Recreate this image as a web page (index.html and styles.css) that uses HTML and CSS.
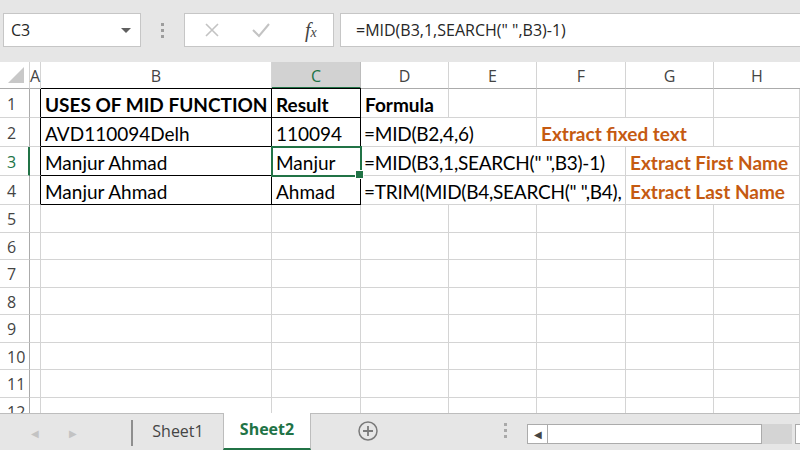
FILE: index.html
```html
<!DOCTYPE html>
<html lang="en">
<head>
    <meta charset="UTF-8">
    <title>MID function - Sheet2</title>
    <link rel="stylesheet" href="styles.css">
</head>
<body>
    <div class="app">
        <div class="toolbar">
            <div class="namebox">
                <span>C3</span>
                <span class="caret"></span>
            </div>
            <div class="grip"><i></i><i></i><i></i></div>
            <div class="fxbox">
                <svg class="ico" width="20" height="20" viewBox="0 0 20 20"><path d="M4 4 L16 16 M16 4 L4 16" stroke="#c3c3c3" stroke-width="1.6" fill="none"/></svg>
                <svg class="ico" width="22" height="20" viewBox="0 0 22 20"><path d="M3 10 L9 16 L19 4" stroke="#c3c3c3" stroke-width="2" fill="none"/></svg>
                <span class="fx">f<small>x</small></span>
            </div>
            <div class="formula">=MID(B3,1,SEARCH(" ",B3)-1)</div>
        </div>

        <div class="sheet">
            <div class="hd corner"><span class="tri"></span></div>
            <div class="hd col">A</div>
            <div class="hd col">B</div>
            <div class="hd col sel">C</div>
            <div class="hd col">D</div>
            <div class="hd col">E</div>
            <div class="hd col">F</div>
            <div class="hd col">G</div>
            <div class="hd col last">H</div>

            <div class="hd row">1</div>
            <div class="c edge"></div>
            <div class="c bx top bold">USES OF MID FUNCTION</div>
            <div class="c bx top bold">Result</div>
            <div class="c bold">Formula</div>
            <div class="c"></div>
            <div class="c"></div>
            <div class="c"></div>
            <div class="c"></div>

            <div class="hd row">2</div>
            <div class="c edge"></div>
            <div class="c bx">AVD110094Delh</div>
            <div class="c bx">110094</div>
            <div class="c span2 fm">=MID(B2,4,6)</div>
            <div class="c span2 note">Extract fixed text</div>
            <div class="c"></div>

            <div class="hd row rsel">3</div>
            <div class="c edge"></div>
            <div class="c bx">Manjur Ahmad</div>
            <div class="c bx active">Manjur</div>
            <div class="c span3 fm">=MID(B3,1,SEARCH(" ",B3)-1)</div>
            <div class="c span2 note">Extract First Name</div>

            <div class="hd row">4</div>
            <div class="c edge"></div>
            <div class="c bx">Manjur Ahmad</div>
            <div class="c bx">Ahmad</div>
            <div class="c span3 fm">=TRIM(MID(B4,SEARCH(" ",B4),</div>
            <div class="c span2 note">Extract Last Name</div>
        </div>

        <div class="tabs">
            <div class="nav">
                <span class="arrow">&#9664;</span>
                <span class="arrow">&#9654;</span>
            </div>
            <div class="tab">Sheet1</div>
            <div class="tab on">Sheet2</div>
            <div class="add">
                <svg width="22" height="22" viewBox="0 0 22 22"><circle cx="11" cy="11" r="9" stroke="#7a7a7a" stroke-width="1.5" fill="none"/><path d="M11 6 V16 M6 11 H16" stroke="#7a7a7a" stroke-width="1.8"/></svg>
            </div>
            <div class="grip small"><i></i><i></i><i></i></div>
            <div class="hscroll">
                <span class="sbtn">&#9664;</span>
                <span class="track"></span>
            </div>
            <div class="gap"></div>
            <div class="hscroll end"></div>
        </div>
    </div>

    <script>
        // empty rows 5 - 12
        const sheet = document.querySelector('.sheet');
        for (let r = 5; r <= 12; r++) {
            let html = `<div class="hd row">${r}</div><div class="c edge plain"></div>`;
            for (let k = 0; k < 7; k++) html += '<div class="c"></div>';
            sheet.insertAdjacentHTML('beforeend', html);
        }
    </script>
</body>
</html>
```

FILE: styles.css
```css
* { box-sizing: border-box; }
body { margin: 0; font-family: "Open Sans", "Noto Sans", sans-serif; background: #e6e6e6; }
.app { width: 800px; height: 450px; overflow: hidden; display: flex; flex-direction: column; }

/* formula bar */
.toolbar { height: 62px; display: flex; align-items: center; padding: 0 0 2px 3px; gap: 0; }
.namebox { width: 138px; height: 34px; background: #fff; border: 1px solid #c6c6c6; display: flex; align-items: center; justify-content: space-between; padding: 0 9px 0 7px; font-size: 16px; color: #262626; }
.caret { width: 0; height: 0; border-left: 5px solid transparent; border-right: 5px solid transparent; border-top: 5px solid #5f5f5f; }
.grip { width: 43px; display: flex; flex-direction: column; align-items: center; gap: 3px; }
.grip i { width: 3px; height: 3px; background: #9d9d9d; display: block; }
.fxbox { width: 150px; height: 34px; background: #fff; border: 1px solid #c6c6c6; display: flex; align-items: center; padding: 0 10px 0 17px; gap: 28px; }
.fx { font-family: "Liberation Serif", serif; font-style: italic; font-size: 20px; color: #444; margin-left: 5px; }
.fx small { font-size: 14px; }
.formula { flex: 1; height: 34px; margin-left: 6px; background: #fff; border: 1px solid #c6c6c6; border-right: none; display: flex; align-items: center; padding-left: 15px; font-size: 16px; color: #262626; }

/* grid */
.sheet { height: 351px; background: #fff; display: grid; overflow: hidden;
    grid-template-columns: 30px 11px 231px 89px 88px 88px 89px 88px 86px;
    grid-template-rows: 27px 29px 29px 29px 29px repeat(8, 27.5px);
    font-family: Lato, "Liberation Sans", sans-serif; font-size: 19px; color: #000; }
.hd { background: #fff; color: #444; font-family: "Open Sans", sans-serif; font-size: 16px; display: flex; align-items: center; justify-content: center; }
.col { border-right: 1px solid #d4d4d4; border-bottom: 1px solid #ababab; padding-top: 2px; }
.col.last { border-right: none; }
.col.sel { background: #d2d2d2; color: #217346; border-bottom: 2px solid #217346; border-right-color: #bcbcbc; }
.corner { border-right: 1px solid #d4d4d4; border-bottom: 1px solid #ababab; justify-content: flex-end; align-items: flex-end; padding: 0 5px 5px 0; }
.tri { width: 0; height: 0; border-left: 16px solid transparent; border-bottom: 16px solid #c8c8c8; }
.row { border-right: 1px solid #ababab; border-bottom: 1px solid #d4d4d4; justify-content: flex-start; padding-left: 7px; padding-top: 2px; }
.row.rsel { color: #217346; border-right: 2px solid #217346; background: #fff; }

.c { border-right: 1px solid #d4d4d4; border-bottom: 1px solid #d4d4d4; display: flex; align-items: flex-end; padding: 0 0 1px 4px; white-space: nowrap; overflow: hidden; }
.c.edge { border-right-color: #000; }
.c.edge.plain { border-right-color: #d4d4d4; }
.c.bx { border-right-color: #000; border-bottom-color: #000; }
.c.top { border-top: 1px solid #000; margin-top: -1px; }
.c.fm { letter-spacing: -0.25px; padding-left: 3px; }
.bold { font-weight: bold; }
.span2 { grid-column: span 2; }
.span3 { grid-column: span 3; }
.note { color: #c55a11; font-weight: bold; }
.active { position: relative; overflow: visible; outline: 2px solid #217346; outline-offset: -1px; }
.active::after { content: ""; position: absolute; right: -4px; bottom: -4px; width: 7px; height: 7px; background: #217346; border: 1px solid #fff; }

/* sheet tabs */
.tabs { flex: 1; display: flex; align-items: stretch; border-top: 1px solid #bdbdbd; background: #e6e6e6; }
.tabs > * { flex-shrink: 0; }
.nav { width: 133px; display: flex; align-items: center; gap: 30px; padding-left: 31px; border-right: 2px solid #8e8e8e; margin: 6px 0 4px; }
.arrow { font-size: 10px; color: #c3c3c3; }
.tab { width: 90px; display: flex; align-items: center; justify-content: center; font-size: 16px; color: #444; padding-bottom: 3px; }
.tab.on { width: 88px; background: #fff; color: #217346; font-weight: bold; border-left: 1px solid #bdbdbd; border-right: 1px solid #bdbdbd; border-bottom: 2px solid #217346; margin-top: -1px; }
.add { width: 114px; display: flex; align-items: center; justify-content: center; padding-bottom: 3px; }
.grip.small { width: 22px; margin-left: 69px; justify-content: center; gap: 3px; padding-bottom: 3px; }
.grip.small i { background: #a9a9a9; }
.hscroll { width: 235px; height: 20px; margin: 10px 0 0 11px; background: #fff; border: 1px solid #ababab; display: flex; }
.sbtn { width: 20px; border-right: 1px solid #ababab; font-size: 10px; color: #444; display: flex; align-items: center; justify-content: center; }
.gap { width: 30px; height: 20px; margin-top: 10px; background: #d4d4d4; }
.hscroll.end { width: 20px; margin-left: 3px; }
```
